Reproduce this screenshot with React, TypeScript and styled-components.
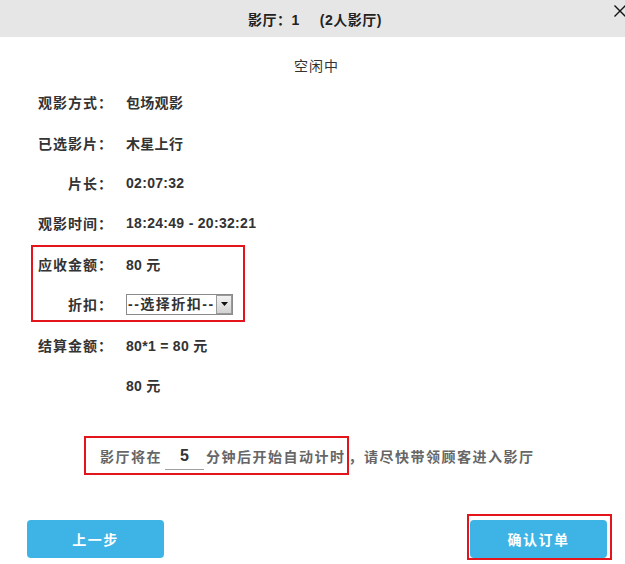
import React from "react";
import styled, { createGlobalStyle } from "styled-components";

const GlobalStyle = createGlobalStyle`
  html, body { margin: 0; padding: 0; background: #fff; }
  body {
    font-family: "Liberation Sans", "Noto Sans CJK SC", Arial, sans-serif;
    color: #333;
  }
  * { box-sizing: border-box; }
`;

const Page = styled.div`
  width: 625px;
  height: 564px;
  overflow: hidden;
  position: relative;
  background: #fff;
`;

const Header = styled.div`
  position: relative;
  height: 37px;
  background: #e6e6e6;
  display: flex;
  align-items: center;
  justify-content: center;
  padding-left: 5px;
  font-size: 14px;
  font-weight: bold;
  color: #222;
  letter-spacing: 0.5px;
`;

const TitleExtra = styled.span`
  margin-left: 20px;
`;

const CloseIcon = styled.svg`
  position: absolute;
  left: 614px;
  top: 5px;
`;

const Status = styled.div`
  margin-top: 18px;
  height: 22px;
  line-height: 22px;
  text-align: center;
  font-size: 14px;
  color: #333;
  letter-spacing: 1px;
  padding-left: 8px;
`;

const Rows = styled.div`
  margin-top: 5px;
  display: flex;
  flex-direction: column;
`;

const Group = styled.div`
  position: relative;
  display: flex;
  flex-direction: column;
  &::after {
    content: "";
    position: absolute;
    left: 31px;
    top: 1px;
    width: 210px;
    height: 73px;
    border: 2px solid #e3141b;
    pointer-events: none;
  }
`;

const Row = styled.div`
  height: 40.4px;
  display: flex;
  align-items: center;
  font-size: 14px;
  font-weight: bold;
  color: #333;
`;

const Label = styled.div`
  width: 113px;
  flex: none;
  text-align: right;
  letter-spacing: 1px;
`;

const Value = styled.div`
  margin-left: 13px;
  letter-spacing: 0.3px;
  white-space: nowrap;
`;

const SelectWrap = styled.div`
  position: relative;
  margin-left: 13px;
  width: 107px;
  height: 21px;
`;

const Select = styled.select`
  appearance: none;
  -webkit-appearance: none;
  width: 100%;
  height: 100%;
  border: 1px solid #8a8a8a;
  border-radius: 0;
  background: #fff;
  padding: 0 0 0 1px;
  margin: 0;
  font-family: "Liberation Sans", "Noto Sans CJK SC", Arial, sans-serif;
  font-size: 14px;
  font-weight: bold;
  color: #333;
  letter-spacing: 1.5px;
  outline: none;
`;

const SelectArrow = styled.span`
  position: absolute;
  right: 1px;
  top: 1px;
  bottom: 1px;
  width: 16px;
  border: 1px solid #9a9a9a;
  background: linear-gradient(#f2f2f2, #d2d2d2);
  display: flex;
  align-items: center;
  justify-content: center;
  pointer-events: none;
`;

const TimerLine = styled.div`
  margin-top: 31px;
  padding-left: 84px;
  display: flex;
  align-items: center;
  height: 39px;
  font-size: 14px;
  font-weight: bold;
  color: #666;
  letter-spacing: 1.5px;
  white-space: nowrap;
`;

const Highlight = styled.div`
  display: inline-flex;
  align-items: center;
  height: 39px;
  border: 2px solid #e3141b;
  padding: 0 1px 0 14px;
`;

const MinuteInput = styled.input`
  width: 39px;
  height: 26px;
  margin: 0 2px 0 3px;
  padding: 0;
  border: none;
  border-bottom: 1px solid #a0a0a0;
  background: transparent;
  text-align: center;
  font-family: "Liberation Sans", Arial, sans-serif;
  font-size: 16px;
  font-weight: bold;
  color: #333;
  outline: none;
  transform: translateY(1px);
`;

const Footer = styled.div`
  margin-top: 39px;
  display: flex;
  justify-content: space-between;
  align-items: flex-start;
  padding: 0 13px 0 27px;
`;

const Button = styled.button<{ $offset?: number }>`
  width: 137px;
  height: 38px;
  border: none;
  border-radius: 4px;
  background: #3db4e5;
  color: #fff;
  font-family: "Liberation Sans", "Noto Sans CJK SC", Arial, sans-serif;
  font-size: 14px;
  font-weight: bold;
  letter-spacing: 1.5px;
  cursor: pointer;
  margin-top: ${(p) => p.$offset ?? 0}px;
`;

const ButtonFrame = styled.div`
  border: 2px solid #e3141b;
  padding: 4px 3px 0 1px;
  display: flex;
`;

export default function App() {
  return (
    <Page>
      <GlobalStyle />
      <Header>
        <span>影厅：1</span>
        <TitleExtra>(2人影厅)</TitleExtra>
        <CloseIcon width="12" height="12" viewBox="0 0 12 12">
          <path d="M0.5 0.5 L11.5 11.5 M11.5 0.5 L0.5 11.5" stroke="#111" strokeWidth="1.4" fill="none" />
        </CloseIcon>
      </Header>
      <Status>空闲中</Status>
      <Rows>
        <Row>
          <Label>观影方式：</Label>
          <Value>包场观影</Value>
        </Row>
        <Row>
          <Label>已选影片：</Label>
          <Value>木星上行</Value>
        </Row>
        <Row>
          <Label>片长：</Label>
          <Value>02:07:32</Value>
        </Row>
        <Row>
          <Label>观影时间：</Label>
          <Value>18:24:49 - 20:32:21</Value>
        </Row>
        <Group>
          <Row>
            <Label>应收金额：</Label>
            <Value>80 元</Value>
          </Row>
          <Row>
            <Label>折扣：</Label>
            <SelectWrap>
              <Select defaultValue="">
                <option value="">--选择折扣--</option>
              </Select>
              <SelectArrow>
                <svg width="7" height="4" viewBox="0 0 7 4">
                  <path d="M0 0 L7 0 L3.5 4 Z" fill="#111" />
                </svg>
              </SelectArrow>
            </SelectWrap>
          </Row>
        </Group>
        <Row>
          <Label>结算金额：</Label>
          <Value>80*1 = 80 元</Value>
        </Row>
        <Row>
          <Label></Label>
          <Value>80 元</Value>
        </Row>
      </Rows>
      <TimerLine>
        <Highlight>
          <span>影厅将在</span>
          <MinuteInput defaultValue="5" />
          <span>分钟后开始自动计时</span>
        </Highlight>
        <span>，请尽快带领顾客进入影厅</span>
      </TimerLine>
      <Footer>
        <Button $offset={6}>上一步</Button>
        <ButtonFrame>
          <Button>确认订单</Button>
        </ButtonFrame>
      </Footer>
    </Page>
  );
}
